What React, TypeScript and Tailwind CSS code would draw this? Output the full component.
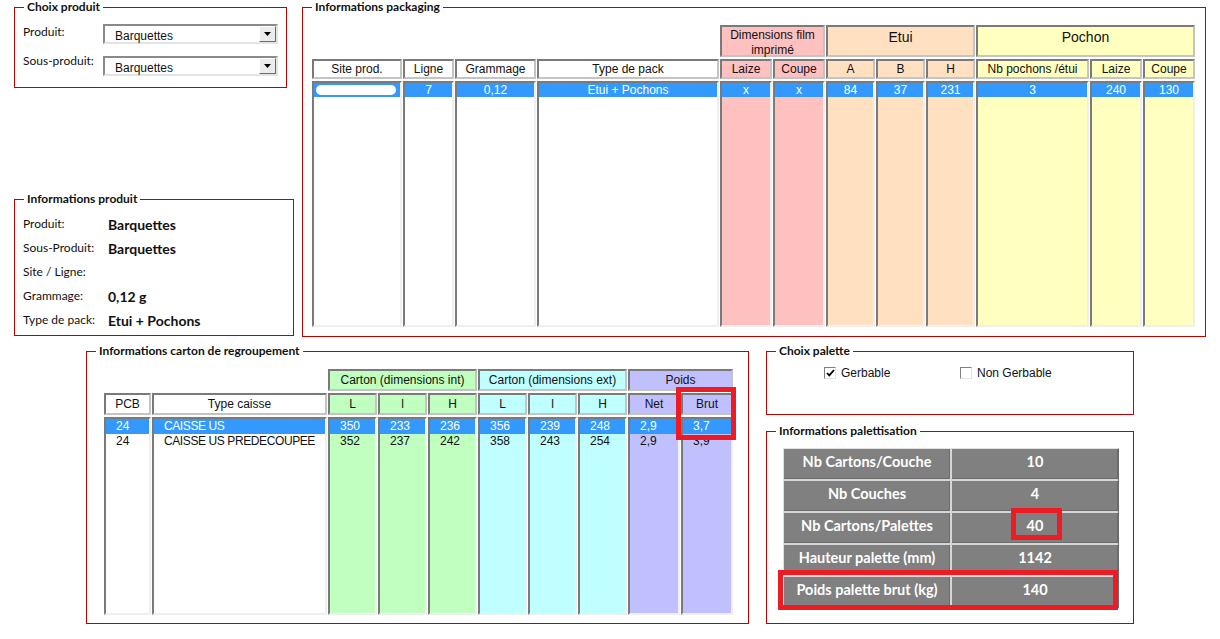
import React from 'react';

// Windows-style sunken/raised borders used by the list columns
const HEAD = "flex items-center justify-center border-2 border-t-[#7a7a7a] border-l-[#7a7a7a] border-r-[#c4c4c4] border-b-[#c4c4c4] text-[12px] leading-[14px] text-[#111]";
const BODY = "border-2 border-t-[#7a7a7a] border-l-[#7a7a7a] border-r-[#efefef] border-b-[#efefef]";
const SANS = "font-['Liberation_Sans',Arial,sans-serif]";
const CALIBRI = "font-['Lato',sans-serif]";

function Frame({ title, className = '', children }: { title: string; className?: string; children?: React.ReactNode }) {
  return (
    <div className={`relative border border-[#c00000] ${className}`}>
      <span className={`absolute -top-[8px] left-[9px] bg-white px-[3px] ${CALIBRI} text-[12px] leading-[14px] font-bold text-[#111]`}>
        {title}
      </span>
      {children}
    </div>
  );
}

function Select({ value }: { value: string }) {
  return (
    <div className="flex h-[20px] w-[175px] items-center border-2 border-t-[#8a8a8a] border-l-[#8a8a8a] border-r-[#e4e4e4] border-b-[#e4e4e4] bg-white">
      <span className={`flex-1 pl-[10px] pt-[3px] ${SANS} text-[12px] leading-[14px] text-[#111]`}>{value}</span>
      <div className="flex h-[16px] w-[17px] items-center justify-center border border-t-white border-l-white border-r-[#6a6a6a] border-b-[#6a6a6a] bg-[#ececec]">
        <svg width="7" height="4" viewBox="0 0 7 4">
          <path d="M0 0h7L3.5 4z" fill="#000" />
        </svg>
      </div>
    </div>
  );
}

function Check({ checked = false }: { checked?: boolean }) {
  return (
    <span className="flex h-[12px] w-[12px] items-center justify-center border border-t-[#808080] border-l-[#808080] border-r-[#e2e2e2] border-b-[#e2e2e2] bg-white">
      {checked && (
        <svg width="9" height="8" viewBox="0 0 9 8">
          <path d="M1 4l2.3 2.4L8 1" fill="none" stroke="#000" strokeWidth="1.8" />
        </svg>
      )}
    </span>
  );
}

const packCols = [
  { label: 'Site prod.', bg: 'bg-white', value: '', hidden: true },
  { label: 'Ligne', bg: 'bg-white', value: '7' },
  { label: 'Grammage', bg: 'bg-white', value: '0,12' },
  { label: 'Type de pack', bg: 'bg-white', value: 'Etui + Pochons' },
  { label: 'Laize', bg: 'bg-[#ffc0c0]', value: 'x' },
  { label: 'Coupe', bg: 'bg-[#ffc0c0]', value: 'x' },
  { label: 'A', bg: 'bg-[#ffe0c0]', value: '84' },
  { label: 'B', bg: 'bg-[#ffe0c0]', value: '37' },
  { label: 'H', bg: 'bg-[#ffe0c0]', value: '231' },
  { label: 'Nb pochons /étui', bg: 'bg-[#ffffc0]', value: '3' },
  { label: 'Laize', bg: 'bg-[#ffffc0]', value: '240' },
  { label: 'Coupe', bg: 'bg-[#ffffc0]', value: '130' },
];

const cartonCols = [
  { label: 'PCB', bg: 'bg-white', rows: ['24', '24'] },
  { label: 'Type caisse', bg: 'bg-white', rows: ['CAISSE US', 'CAISSE US PREDECOUPEE'], caps: true },
  { label: 'L', bg: 'bg-[#c0ffc0]', rows: ['350', '352'] },
  { label: 'l', bg: 'bg-[#c0ffc0]', rows: ['233', '237'] },
  { label: 'H', bg: 'bg-[#c0ffc0]', rows: ['236', '242'] },
  { label: 'L', bg: 'bg-[#c0ffff]', rows: ['356', '358'] },
  { label: 'l', bg: 'bg-[#c0ffff]', rows: ['239', '243'] },
  { label: 'H', bg: 'bg-[#c0ffff]', rows: ['248', '254'] },
  { label: 'Net', bg: 'bg-[#c0c0ff]', rows: ['2,9', '2,9'] },
  { label: 'Brut', bg: 'bg-[#c0c0ff]', rows: ['3,7', '3,9'] },
];

const palRows = [
  ['Nb Cartons/Couche', '10'],
  ['Nb Couches', '4'],
  ['Nb Cartons/Palettes', '40'],
  ['Hauteur palette (mm)', '1142'],
  ['Poids palette brut (kg)', '140'],
];

const infoRows = [
  ['Produit:', 'Barquettes'],
  ['Sous-Produit:', 'Barquettes'],
  ['Site / Ligne:', ''],
  ['Grammage:', '0,12 g'],
  ['Type de pack:', 'Etui + Pochons'],
];

export default function App() {
  return (
    <div className="h-[639px] w-[1220px] overflow-hidden bg-white text-[#111]">
      {/* top half */}
      <div className="flex items-start pt-[7px]">
        <div className="ml-[14px] flex w-[280px] flex-col items-start">
          <Frame title="Choix produit" className="h-[81px] w-[273px] pt-[16px]">
            <div className="flex">
              <div className={`w-[88px] pl-[8px] ${CALIBRI} text-[12px] leading-[16px]`}>Produit:</div>
              <Select value="Barquettes" />
            </div>
            <div className="mt-[12px] flex">
              <div className={`-mt-[3px] w-[88px] pl-[8px] ${CALIBRI} text-[12px] leading-[16px]`}>Sous-produit:</div>
              <Select value="Barquettes" />
            </div>
          </Frame>

          <Frame title="Informations produit" className="mt-[111px] h-[137px] w-[280px] pt-[12px]">
            {infoRows.map(([k, v]) => (
              <div key={k} className="flex h-[24px] items-center">
                <div className={`w-[93px] pl-[8px] ${CALIBRI} text-[12px]`}>{k}</div>
                <div className={`${CALIBRI} text-[14px] font-bold`}>{v}</div>
              </div>
            ))}
          </Frame>
        </div>

        <Frame title="Informations packaging" className="ml-[8px] h-[330px] w-[904px] pl-[9px] pt-[17px]">
          <div className={`grid grid-cols-[90px_51px_81px_182px_52px_52px_49px_49px_49px_113px_52px_52px] grid-rows-[32px_20px_246px] gap-x-[1px] gap-y-[2px] ${SANS}`}>
            <div className={`${HEAD} col-span-2 col-start-5 row-start-1 items-start bg-[#ffc0c0] pt-[1px] text-center leading-[15px]`}>
              Dimensions film<br />imprimé
            </div>
            <div className={`${HEAD} col-span-3 col-start-7 row-start-1 items-start bg-[#ffe0c0] pt-[1px] text-[14px] leading-[18px]`}>Etui</div>
            <div className={`${HEAD} col-span-3 col-start-10 row-start-1 items-start bg-[#ffffc0] pt-[1px] text-[14px] leading-[18px]`}>Pochon</div>
            {packCols.map((c, i) => (
              <div key={'h' + i} className={`${HEAD} row-start-2 ${c.bg}`}>{c.label}</div>
            ))}
            {packCols.map((c, i) => (
              <div key={'b' + i} className={`${BODY} row-start-3 ${c.bg}`}>
                <div className="flex h-[14px] items-center justify-center bg-[#3399ff] text-[12px] leading-[14px] text-white">
                  {c.hidden ? <span className="mr-[2px] h-[10px] w-[80px] rounded-[5px] bg-white blur-[0.5px]" /> : c.value}
                </div>
              </div>
            ))}
          </div>
        </Frame>
      </div>

      {/* bottom half */}
      <div className="mt-[14px] flex items-start">
        <Frame title="Informations carton de regroupement" className="ml-[86px] h-[273px] w-[663px] pl-[17px] pt-[17px]">
          <div className={`grid grid-cols-[47px_175px_49px_49px_49px_49px_49px_49px_52px_52px] grid-rows-[22px_22px_198px] gap-x-[1px] gap-y-[2px] ${SANS}`}>
            <div className={`${HEAD} col-span-3 col-start-3 row-start-1 bg-[#c0ffc0]`}>Carton (dimensions int)</div>
            <div className={`${HEAD} col-span-3 col-start-6 row-start-1 bg-[#c0ffff]`}>Carton (dimensions ext)</div>
            <div className={`${HEAD} col-span-2 col-start-9 row-start-1 bg-[#c0c0ff]`}>Poids</div>
            {cartonCols.map((c, i) => (
              <div key={'h' + i} className={`${HEAD} row-start-2 ${c.bg}`}>{c.label}</div>
            ))}
            {cartonCols.map((c, i) => (
              <div key={'b' + i} className={`${BODY} row-start-3 ${c.bg} text-[12px] leading-[15px] ${c.caps ? 'text-[11px] tracking-[-0.4px]' : ''}`}>
                <div className="h-[15px] whitespace-nowrap bg-[#3399ff] pl-[10px] text-white">{c.rows[0]}</div>
                <div className="h-[15px] whitespace-nowrap pl-[10px]">{c.rows[1]}</div>
              </div>
            ))}
          </div>
          {/* annotation */}
          <div className="absolute left-[589px] top-[35px] h-[53px] w-[60px] border-[5px] border-[#ed1c24]" />
        </Frame>

        <div className="ml-[17px] flex w-[368px] flex-col">
          <Frame title="Choix palette" className="h-[64px] w-[368px] pt-[15px]">
            <div className={`flex pl-[57px] ${SANS} text-[12px] leading-[12px]`}>
              <div className="flex w-[136px] items-center gap-[5px]">
                <Check checked />
                <span>Gerbable</span>
              </div>
              <div className="flex items-center gap-[5px]">
                <Check />
                <span>Non Gerbable</span>
              </div>
            </div>
          </Frame>

          <Frame title="Informations palettisation" className="mt-[16px] h-[193px] w-[368px] pl-[16px] pt-[16px]">
            <div className={`grid w-[336px] grid-cols-[166px_166px] gap-[2px] border border-t-[#e0e0e0] border-l-[#e0e0e0] border-r-[#6a6a6a] border-b-[#6a6a6a] bg-[#d6d6d6] ${CALIBRI}`}>
              {palRows.map(([k, v]) => (
                <React.Fragment key={k}>
                  <div className="flex h-[30px] items-center justify-center bg-[#808080] pb-[4px] text-[14.5px] font-bold text-white shadow-[inset_-1px_-1px_0_#6c6c6c]">{k}</div>
                  <div className="flex h-[30px] items-center justify-center bg-[#808080] pb-[4px] text-[14.5px] font-bold text-white shadow-[inset_-1px_-1px_0_#6c6c6c]">{v}</div>
                </React.Fragment>
              ))}
            </div>
            {/* annotations */}
            <div className="absolute left-[244px] top-[76px] h-[32px] w-[51px] border-[5px] border-[#ed1c24]" />
            <div className="absolute left-[11px] top-[138px] h-[40px] w-[340px] border-[5px] border-[#ed1c24]" />
          </Frame>
        </div>
      </div>
    </div>
  );
}
